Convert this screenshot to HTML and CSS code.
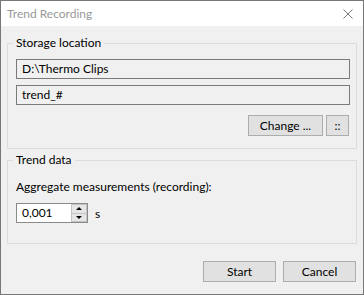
FILE: index.html
```html
<!DOCTYPE html>
<html lang="en">
<head>
  <meta charset="UTF-8">
  <title>Trend Recording</title>
  <link rel="stylesheet" href="styles.css">
</head>
<body>
<div class="window">
  <div class="titlebar">
    <span class="title">Trend Recording</span>
    <svg class="close" width="10" height="10" viewBox="0 0 10 10">
      <path d="M0.5 0.5 L9.5 9.5 M9.5 0.5 L0.5 9.5" stroke="#7a7a7a" stroke-width="1" fill="none"/>
    </svg>
  </div>
  <div class="content">
    <fieldset class="group storage">
      <legend>Storage location</legend>
      <div class="field">D:\Thermo Clips</div>
      <div class="field">trend_#</div>
      <div class="btn-row">
        <button class="btn change">Change ...</button>
        <button class="btn dots">::</button>
      </div>
    </fieldset>
    <fieldset class="group trend">
      <legend>Trend data</legend>
      <div class="label">Aggregate measurements (recording):</div>
      <div class="spin-row">
        <div class="spin">
          <span class="spin-value">0,001</span>
          <div class="spin-btns">
            <span class="spin-btn"><i class="arrow up"></i></span>
            <span class="spin-btn"><i class="arrow down"></i></span>
          </div>
        </div>
        <span class="unit">s</span>
      </div>
    </fieldset>
    <div class="footer">
      <button class="btn action">Start</button>
      <button class="btn action">Cancel</button>
    </div>
  </div>
</div>
</body>
</html>
```

FILE: styles.css
```css
body { margin: 0; font-family: Lato, "Liberation Sans", sans-serif; font-size: 12px; color: #000; background: #f0f0f0; }
.window { width: 364px; height: 295px; box-sizing: border-box; border: 1px solid #777; background: #f0f0f0; }
.titlebar { height: 25px; background: #fff; display: flex; align-items: center; justify-content: space-between; padding: 0 10px 0 6px; }
.title { color: #999; font-size: 12px; }
.close { display: block; }
.content { padding: 9px 6px 0 6px; }

.group { margin: 0; min-width: 0; border: 1px solid #dcdcdc; padding: 8px 6px 12px 8px; }
.group legend { padding: 0 3px; margin-left: -3px; line-height: 16px; }
.trend { margin-top: 3px; padding-top: 11px; padding-bottom: 20px; }

.field { height: 20px; box-sizing: border-box; border: 1px solid #7a7a7a; background: #f0f0f0; padding: 0 5px; line-height: 18px; }
.field + .field { margin-top: 6px; }

.btn { font-family: inherit; font-size: 12px; color: #000; background: #e1e1e1; border: 1px solid #adadad; height: 21px; padding: 0; margin: 0; }
.btn-row { display: flex; justify-content: flex-end; gap: 3px; margin-top: 10px; padding-right: 1px; }
.change { width: 75px; }
.dots { width: 23px; }

.label { line-height: 16px; }
.spin-row { display: flex; align-items: center; margin-top: 8px; }
.spin { width: 72px; height: 20px; box-sizing: border-box; border: 1px solid #8a8a8a; background: #fff; display: flex; }
.spin-value { flex: 1; padding-left: 5px; line-height: 18px; }
.spin-btns { width: 16px; display: flex; flex-direction: column; }
.spin-btn { flex: 1; background: #e6e6e6; border: 1px solid #c4c4c4; display: flex; align-items: center; justify-content: center; }
.spin-btn + .spin-btn { border-top: none; }
.arrow { width: 0; height: 0; border-left: 3px solid transparent; border-right: 3px solid transparent; }
.arrow.up { border-bottom: 3px solid #000; }
.arrow.down { border-top: 3px solid #000; }
.unit { margin-left: 7px; }

.footer { display: flex; justify-content: flex-end; gap: 7px; margin-top: 17px; padding-right: 1px; }
.action { width: 73px; }
```
